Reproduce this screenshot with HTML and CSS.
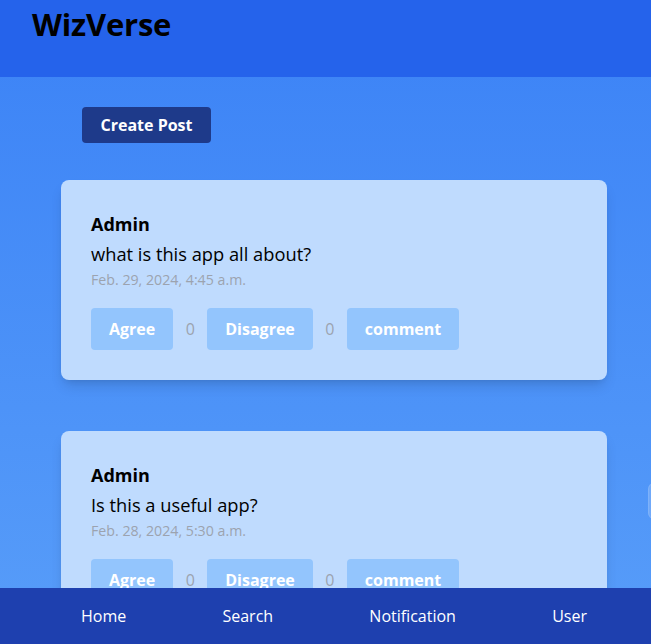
FILE: index.html
```html
<!DOCTYPE html>
<html>
<head>
<meta charset="utf-8">
<title>WizVerse</title>
<link rel="stylesheet" href="styles.css">
</head>
<body>
<header class="topbar">
  <h1 class="brand">WizVerse</h1>
</header>
<main class="feed">
  <div class="actions">
    <button class="create-btn">Create Post</button>
  </div>
  <article class="card">
    <div class="author">Admin</div>
    <p class="body">what is this app all about?</p>
    <div class="date">Feb. 29, 2024, 4:45 a.m.</div>
    <div class="reactions">
      <button class="react-btn">Agree</button>
      <span class="count">0</span>
      <button class="react-btn">Disagree</button>
      <span class="count">0</span>
      <button class="react-btn">comment</button>
    </div>
  </article>
  <article class="card">
    <div class="author">Admin</div>
    <p class="body">Is this a useful app?</p>
    <div class="date">Feb. 28, 2024, 5:30 a.m.</div>
    <div class="reactions">
      <button class="react-btn">Agree</button>
      <span class="count">0</span>
      <button class="react-btn">Disagree</button>
      <span class="count">0</span>
      <button class="react-btn">comment</button>
    </div>
  </article>
  <div class="edge-tab"></div>
</main>
<nav class="bottombar">
  <a class="nav-link">Home</a>
  <a class="nav-link">Search</a>
  <a class="nav-link">Notification</a>
  <a class="nav-link">User</a>
</nav>
</body>
</html>
```
FILE: styles.css
```css
html, body {
  margin: 0;
  padding: 0;
  height: 100%;
  overflow: hidden;
}
body {
  font-family: "Open Sans", "Noto Sans", "DejaVu Sans", sans-serif;
  background: linear-gradient(180deg, #3b82f6 0%, #60a5fa 130%);
  color: #000;
}
.topbar {
  background: #2563eb;
  height: 77px;
  padding: 0 32px;
  box-sizing: border-box;
}
.brand {
  margin: 0;
  font-size: 31px;
  line-height: 48px;
  font-weight: 700;
  letter-spacing: -0.2px;
}
.feed {
  position: relative;
  padding: 30px 44px 0 61px;
  height: 567px;
  box-sizing: border-box;
}
.actions {
  padding-left: 21px;
  margin-bottom: 37px;
}
.create-btn {
  background: #1e3a8a;
  color: #fff;
  border: none;
  border-radius: 4px;
  height: 36px;
  width: 129px;
  font-family: inherit;
  font-size: 16px;
  font-weight: 700;
  padding: 0;
}
.card {
  background: #bfdbfe;
  border-radius: 8px;
  padding: 30px;
  margin-bottom: 51px;
  box-shadow: 0 8px 14px -3px rgba(0,0,0,0.14), 0 4px 6px -4px rgba(0,0,0,0.1);
}
.author {
  font-size: 18px;
  font-weight: 700;
  line-height: 28px;
}
.body {
  margin: 2px 0 0;
  font-size: 18.3px;
  line-height: 28px;
}
.date {
  font-size: 14.2px;
  line-height: 20px;
  color: #9ca3af;
  margin-top: 2px;
}
.reactions {
  display: flex;
  align-items: center;
  margin-top: 18px;
}
.react-btn {
  background: #93c5fd;
  color: #fff;
  border: none;
  border-radius: 4px;
  height: 42px;
  padding: 0 18px;
  font-family: inherit;
  font-size: 16px;
  font-weight: 700;
}
.count {
  color: #9ca3af;
  font-size: 16px;
  width: 34px;
  text-align: center;
}
.edge-tab {
  position: absolute;
  left: 648px;
  top: 406px;
  width: 30px;
  height: 34px;
  border-radius: 6px;
  background: rgba(255,255,255,0.18);
  border: 1px solid rgba(255,255,255,0.1);
}
.bottombar {
  position: fixed;
  left: 0;
  right: 0;
  bottom: 0;
  height: 56px;
  background: #1e40af;
  display: flex;
  align-items: center;
  justify-content: space-between;
  padding: 0 64px 0 81px;
}
.nav-link {
  color: #fff;
  font-size: 16px;
}
```
